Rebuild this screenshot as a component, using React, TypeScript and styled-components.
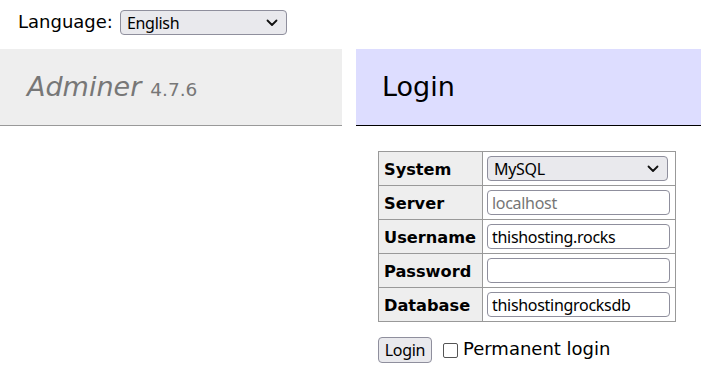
import { FC } from "react";
import styled, { createGlobalStyle } from "styled-components";

const GlobalStyle = createGlobalStyle`
    body {
        margin: 0;
        color: #000;
        background: #fff;
        font: 18px/1.25 "DejaVu Sans", Verdana, sans-serif;
    }
`

const Chevron: FC = () => (
    <ChevronBox>
        <svg width="12" height="8" viewBox="0 0 12 8" fill="none">
            <path d="M1.5 1.5 L6 6 L10.5 1.5" stroke="#111" strokeWidth="1.8" strokeLinecap="round" strokeLinejoin="round" />
        </svg>
    </ChevronBox>
)

const fields = [
    { label: "Server", value: "", placeholder: "localhost" },
    { label: "Username", value: "thishosting.rocks" },
    { label: "Password", value: "", type: "password" },
    { label: "Database", value: "thishostingrocksdb" },
]

const App: FC = () => {
    return <>
        <GlobalStyle />
        <LangBar>
            Language:
            <SelectWrap $width={167}>
                <Select defaultValue="en">
                    <option value="en">English</option>
                </Select>
                <Chevron />
            </SelectWrap>
        </LangBar>

        <Main>
            <Menu>
                <Title>
                    <Brand>Adminer</Brand> <Version>4.7.6</Version>
                </Title>
            </Menu>

            <Content>
                <Heading>Login</Heading>
                <LoginTable>
                    <tbody>
                        <tr>
                            <Th>System</Th>
                            <Td>
                                <SelectWrap $width={181}>
                                    <Select defaultValue="server">
                                        <option value="server">MySQL</option>
                                    </Select>
                                    <Chevron />
                                </SelectWrap>
                            </Td>
                        </tr>
                        {fields.map(f => (
                            <tr key={f.label}>
                                <Th>{f.label}</Th>
                                <Td>
                                    <Input type={f.type ?? "text"} defaultValue={f.value} placeholder={f.placeholder} />
                                </Td>
                            </tr>
                        ))}
                    </tbody>
                </LoginTable>

                <Actions>
                    <Button type="button">Login</Button>
                    <CheckLabel>
                        <Check type="checkbox" />
                        Permanent login
                    </CheckLabel>
                </Actions>
            </Content>
        </Main>
    </>
}

const controlFont = `
    font: 16px "Noto Sans", "Open Sans", sans-serif;
    letter-spacing: -0.3px;
    color: #000;
`

const LangBar = styled.div`
    display: flex;
    align-items: center;
    gap: 7px;
    height: 45px;
    padding: 0 18px;
    margin-bottom: 4px;
`

const SelectWrap = styled.div<{ $width: number }>`
    position: relative;
    width: ${p => p.$width}px;
    height: 25px;
`

const Select = styled.select`
    appearance: none;
    width: 100%;
    height: 100%;
    margin: 0;
    padding: 0 24px 0 6px;
    box-sizing: border-box;
    background: #e9e9ed;
    border: 1px solid #8f8f9d;
    border-radius: 4px;
    ${controlFont}
`

const ChevronBox = styled.span`
    position: absolute;
    right: 9px;
    top: 9px;
    display: flex;
    pointer-events: none;
`

const Main = styled.div`
    display: flex;
`

const Menu = styled.div`
    width: 342px;
    flex-shrink: 0;
`

const Title = styled.h1`
    margin: 0;
    height: 76px;
    box-sizing: content-box;
    padding: 0 27px;
    display: flex;
    align-items: center;
    gap: 9px;
    font-size: 27px;
    font-weight: normal;
    background: #eee;
    border-bottom: 1px solid #999;
    color: #777;
`

const Brand = styled.span`
    font-style: italic;
`

const Version = styled.span`
    font-size: 18.5px;
    padding-top: 6px;
`

const Content = styled.div`
    margin-left: 14px;
    width: 345px;
`

const Heading = styled.h2`
    margin: 0 0 25px;
    height: 76px;
    padding: 0 26px;
    display: flex;
    align-items: center;
    font-size: 27px;
    font-weight: normal;
    background: #ddf;
    border-bottom: 1px solid #000;
`

const LoginTable = styled.table`
    margin-left: 22px;
    border-collapse: collapse;
    font-size: 16.2px;
`

const Th = styled.th`
    border: 1px solid #999;
    background: #eee;
    text-align: left;
    padding: 6px 5px 2px 5px;
    height: 25px;
    width: 93px;
`

const Td = styled.td`
    border: 1px solid #999;
    padding: 4px 5px 4px 4px;
    height: 25px;
`

const Input = styled.input`
    display: block;
    width: 183px;
    height: 25px;
    margin: 0;
    padding: 0 4px;
    box-sizing: border-box;
    border: 1px solid #8f8f9d;
    border-radius: 4px;
    background: #fff;
    ${controlFont}

    &::placeholder {
        color: #767676;
    }
`

const Actions = styled.div`
    display: flex;
    align-items: center;
    gap: 11px;
    margin: 15px 0 0 22px;
`

const Button = styled.button`
    height: 26px;
    width: 54px;
    padding: 0;
    background: #e9e9ed;
    border: 1px solid #8f8f9d;
    border-radius: 4px;
    ${controlFont}
`

const CheckLabel = styled.label`
    display: flex;
    align-items: center;
    gap: 5px;
    padding-bottom: 2px;
`

const Check = styled.input`
    appearance: none;
    width: 15px;
    height: 15px;
    margin: 3px 0 0;
    border: 1px solid #555;
    border-radius: 2px;
    background: #fff;
`

export default App
